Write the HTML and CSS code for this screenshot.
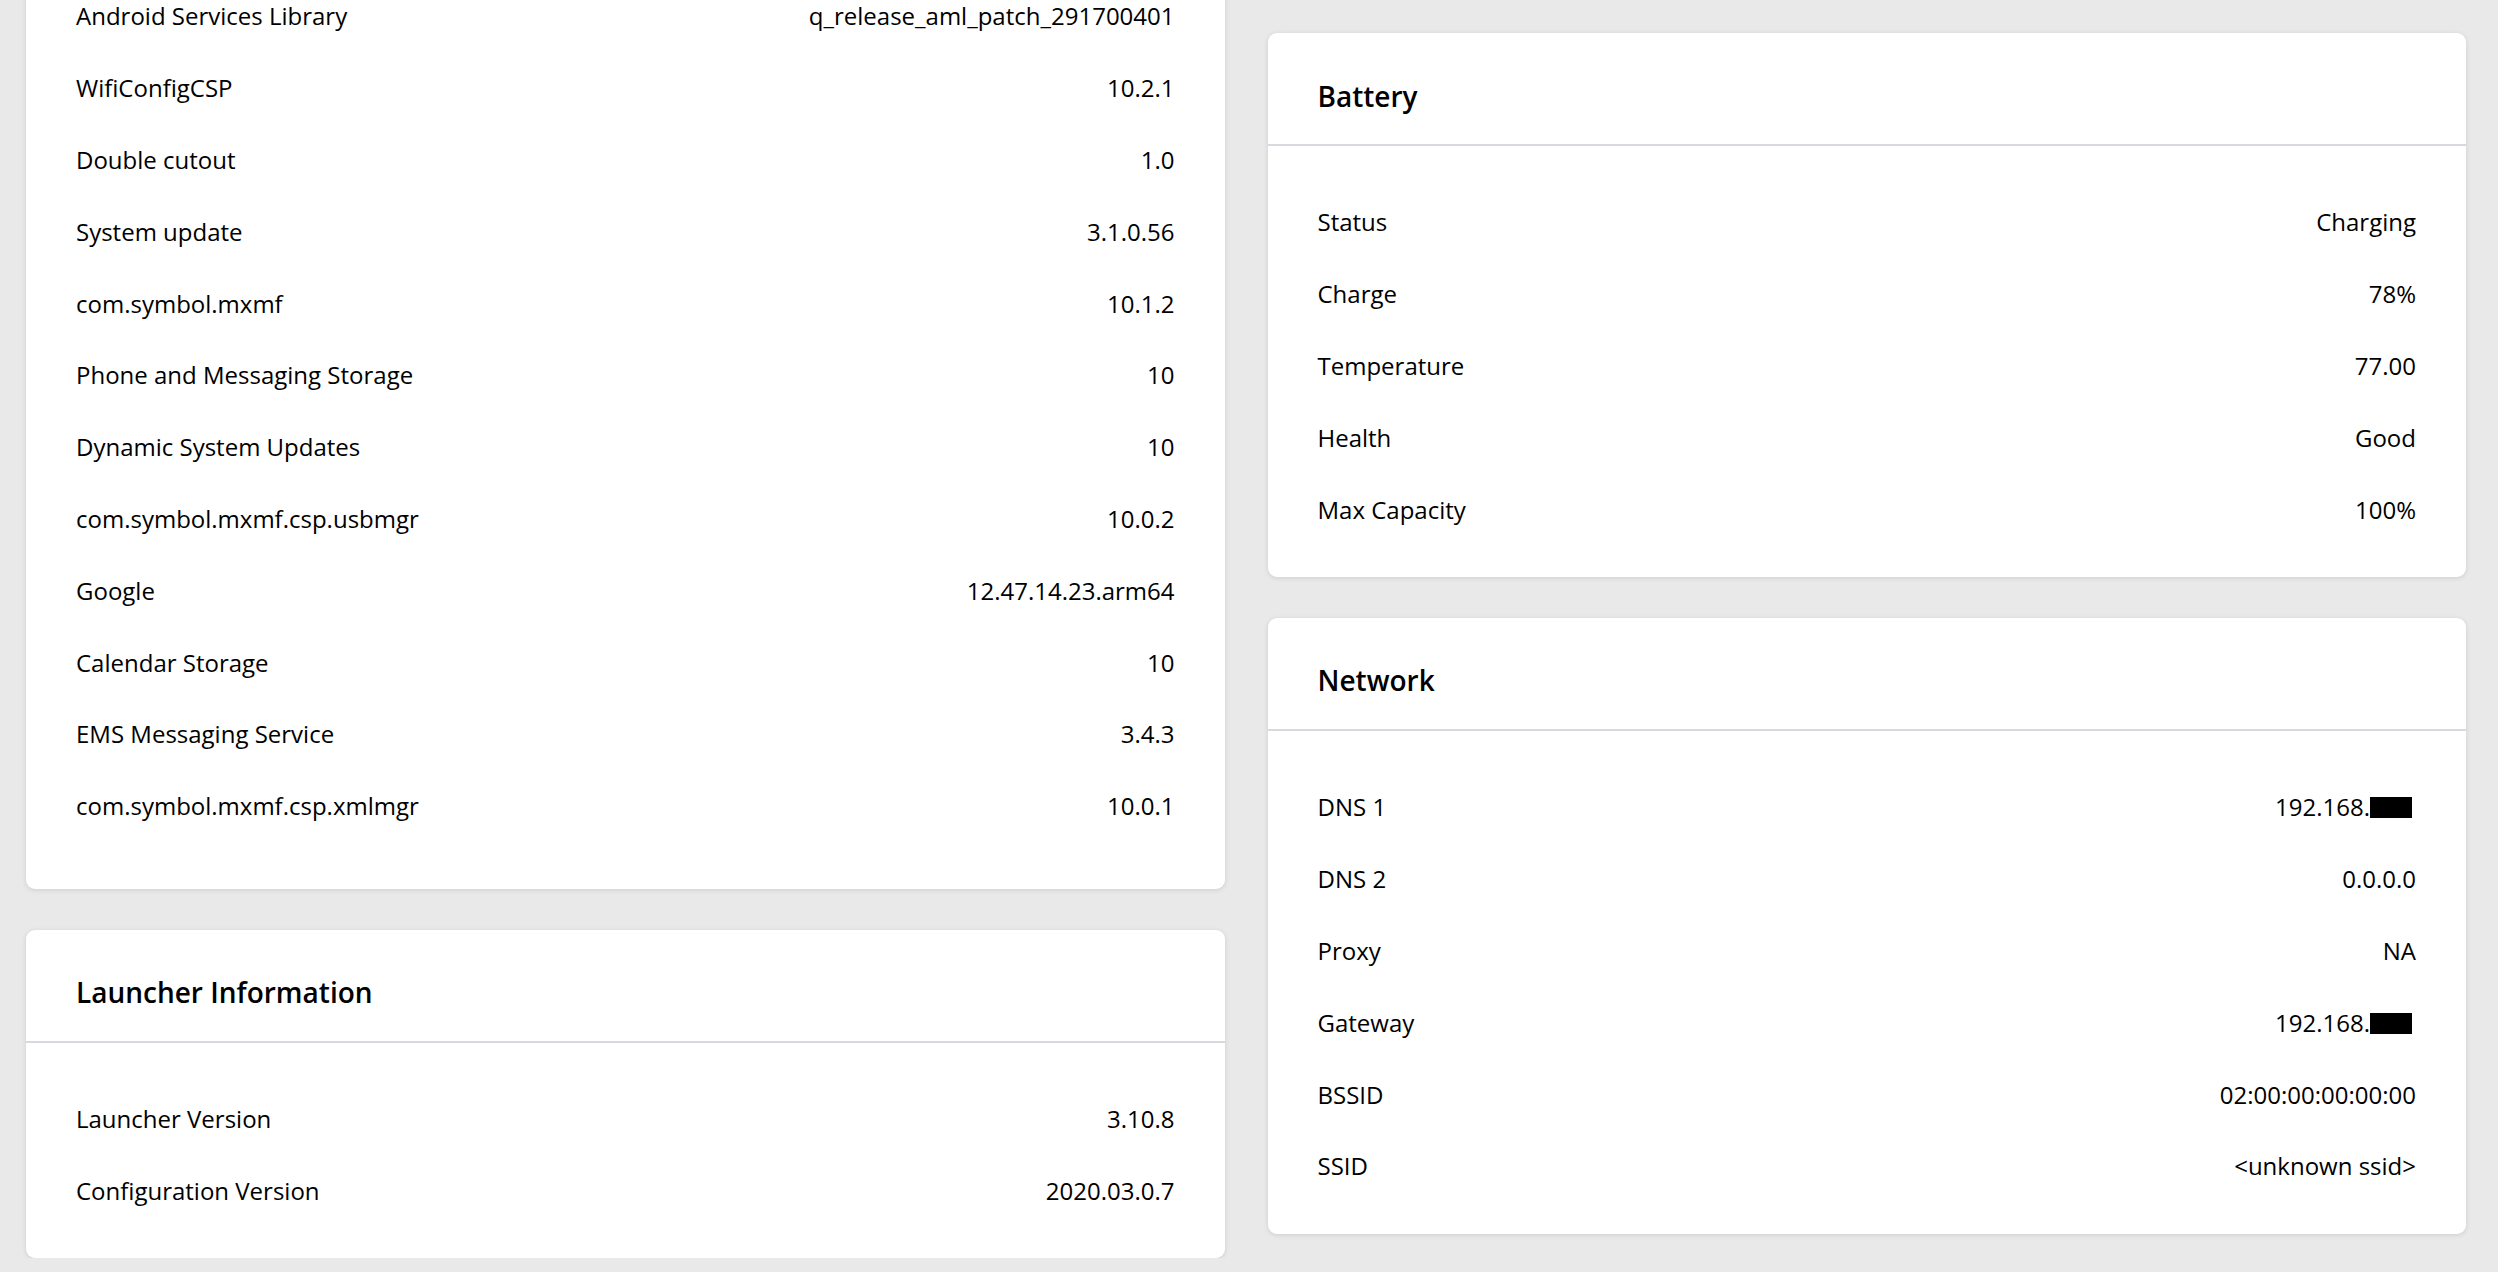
FILE: index.html
```html
<!DOCTYPE html>
<html lang="en">
<head>
    <meta charset="UTF-8">
    <meta name="viewport" content="width=device-width, initial-scale=1.0">
    <title>Device Information</title>
    <link rel="stylesheet" href="styles.css">
</head>
<body>
    <div class="page">
        <!-- Kolom kiri: daftar aplikasi + launcher -->
        <div class="column">
            <section class="card card-cut">
                <div class="card-body">
                    <div class="row"><span>Android Services Library</span><span>q_release_aml_patch_291700401</span></div>
                    <div class="row"><span>WifiConfigCSP</span><span>10.2.1</span></div>
                    <div class="row"><span>Double cutout</span><span>1.0</span></div>
                    <div class="row"><span>System update</span><span>3.1.0.56</span></div>
                    <div class="row"><span>com.symbol.mxmf</span><span>10.1.2</span></div>
                    <div class="row"><span>Phone and Messaging Storage</span><span>10</span></div>
                    <div class="row"><span>Dynamic System Updates</span><span>10</span></div>
                    <div class="row"><span>com.symbol.mxmf.csp.usbmgr</span><span>10.0.2</span></div>
                    <div class="row"><span>Google</span><span>12.47.14.23.arm64</span></div>
                    <div class="row"><span>Calendar Storage</span><span>10</span></div>
                    <div class="row"><span>EMS Messaging Service</span><span>3.4.3</span></div>
                    <div class="row"><span>com.symbol.mxmf.csp.xmlmgr</span><span>10.0.1</span></div>
                </div>
            </section>

            <section class="card">
                <div class="card-header"><h2>Launcher Information</h2></div>
                <div class="card-body">
                    <div class="row"><span>Launcher Version</span><span>3.10.8</span></div>
                    <div class="row"><span>Configuration Version</span><span>2020.03.0.7</span></div>
                </div>
            </section>
        </div>

        <!-- Kolom kanan: baterai + jaringan -->
        <div class="column">
            <section class="card">
                <div class="card-header"><h2>Battery</h2></div>
                <div class="card-body">
                    <div class="row"><span>Status</span><span>Charging</span></div>
                    <div class="row"><span>Charge</span><span>78%</span></div>
                    <div class="row"><span>Temperature</span><span>77.00</span></div>
                    <div class="row"><span>Health</span><span>Good</span></div>
                    <div class="row"><span>Max Capacity</span><span>100%</span></div>
                </div>
            </section>

            <section class="card">
                <div class="card-header"><h2>Network</h2></div>
                <div class="card-body">
                    <div class="row"><span>DNS 1</span><span>192.168.<i class="redacted"></i></span></div>
                    <div class="row"><span>DNS 2</span><span>0.0.0.0</span></div>
                    <div class="row"><span>Proxy</span><span>NA</span></div>
                    <div class="row"><span>Gateway</span><span>192.168.<i class="redacted"></i></span></div>
                    <div class="row"><span>BSSID</span><span>02:00:00:00:00:00</span></div>
                    <div class="row"><span>SSID</span><span>&lt;unknown ssid&gt;</span></div>
                </div>
            </section>
        </div>
    </div>
</body>
</html>
```

FILE: styles.css
```css
/* Gaya umum halaman */
body {
    margin: 0;
    background-color: #e9e9e9;
    font-family: "Open Sans", "Noto Sans", Arial, sans-serif;
    color: #000;
    overflow: hidden;
}

/* Dua kolom kartu berdampingan */
.page {
    display: flex;
    gap: 43px;
    padding: 33px 32px 0 26px;
}

.column {
    flex: 1;
    display: flex;
    flex-direction: column;
    gap: 41px;
    min-width: 0;
}

/* Kartu putih */
.card {
    background-color: #fff;
    border-radius: 9px;
    box-shadow: 0 1px 5px rgba(0, 0, 0, 0.12);
}

/* Kartu yang sudah ter-scroll ke atas */
.card-cut {
    margin-top: -93px;
}

.card-cut .card-body {
    padding-bottom: 47px;
}

.card-header {
    height: 97px;
    padding: 14px 50px 0;
    display: flex;
    align-items: center;
    border-bottom: 2px solid #d6dadf;
}

.card-header h2 {
    margin: 0;
    font-size: 28px;
    font-weight: 600;
}

.card-body {
    padding: 40px 50px 32px;
}

.row {
    height: 71.8px;
    display: flex;
    align-items: center;
    justify-content: space-between;
    font-size: 24px;
}

/* Kotak hitam untuk IP yang disensor */
.redacted {
    display: inline-block;
    width: 42px;
    height: 21px;
    margin-right: 4px;
    background-color: #000;
    vertical-align: -2px;
}
```
